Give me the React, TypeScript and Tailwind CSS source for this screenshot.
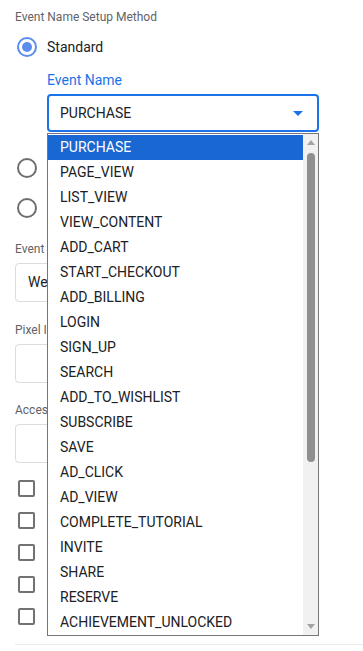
const EVENTS = [
  'PURCHASE',
  'PAGE_VIEW',
  'LIST_VIEW',
  'VIEW_CONTENT',
  'ADD_CART',
  'START_CHECKOUT',
  'ADD_BILLING',
  'LOGIN',
  'SIGN_UP',
  'SEARCH',
  'ADD_TO_WISHLIST',
  'SUBSCRIBE',
  'SAVE',
  'AD_CLICK',
  'AD_VIEW',
  'COMPLETE_TUTORIAL',
  'INVITE',
  'SHARE',
  'RESERVE',
  'ACHIEVEMENT_UNLOCKED',
];

function Radio({ checked, label }: { checked?: boolean; label?: string }) {
  return (
    <div className="flex items-center h-[20px] pl-[17px] gap-[10px]">
      <span
        className={`w-[20px] h-[20px] rounded-full border-2 flex items-center justify-center ${
          checked ? 'border-[#5b8def]' : 'border-[#6f6f6f]'
        }`}
      >
        {checked && <span className="w-[10px] h-[10px] rounded-full bg-[#5b8def]" />}
      </span>
      {label && <span className="text-[14px] text-[#202124]">{label}</span>}
    </div>
  );
}

function Field({ label, value }: { label: string; value?: string }) {
  return (
    <div className="pl-[15px]">
      <div className="text-[12px] leading-[16px] text-[#5f6368]">{label}</div>
      <div className="mt-[6px] h-[39px] w-[300px] border border-[#dadce0] rounded-[4px] flex items-center px-[12px] text-[14px] text-[#202124]">
        {value}
      </div>
    </div>
  );
}

function Checkbox() {
  return (
    <div className="flex items-center h-[17px] pl-[18px]">
      <span className="w-[17px] h-[17px] border-2 border-[#727272] rounded-[2px]" />
    </div>
  );
}

export default function App() {
  return (
    <div
      className="w-[363px] h-[651px] bg-white overflow-hidden"
      style={{ fontFamily: 'Roboto, "Liberation Sans", sans-serif' }}
    >
      <div className="pt-[9px] pl-[15px] text-[12px] leading-[16px] text-[#5f6368]">
        Event Name Setup Method
      </div>

      <div className="mt-[12px]">
        <Radio checked label="Standard" />
      </div>

      {/* Event name select with open list */}
      <div className="pl-[47px] mt-[15px]">
        <div className="text-[14px] leading-[16px] text-[#1a73e8]">Event Name</div>
        <div className="relative mt-[6px] w-[272px]">
          <div className="h-[38px] border-2 border-[#1a73e8] rounded-[4px] flex items-center justify-between pl-[11px] pr-[14px]">
            <span className="text-[14px] text-[#202124]">PURCHASE</span>
            <svg width="10" height="5" viewBox="0 0 10 5">
              <path d="M0 0h10L5 5z" fill="#1a73e8" />
            </svg>
          </div>

          <div className="absolute z-10 top-[calc(100%+1px)] left-0 w-[272px] h-[503px] bg-white border border-[#767676] flex">
            <ul className="flex-1 pt-px">
              {EVENTS.map((e, i) => (
                <li
                  key={e}
                  className={`h-[25px] flex items-center pl-[12px] text-[14px] ${
                    i === 0 ? 'bg-[#1967d2] text-white' : 'text-[#202124]'
                  }`}
                >
                  {e}
                </li>
              ))}
            </ul>
            <div className="w-[15px] bg-[#f1f1f1] flex flex-col items-center">
              <svg className="mt-[6px]" width="8" height="5" viewBox="0 0 8 5">
                <path d="M4 0L8 5H0z" fill="#a3a3a3" />
              </svg>
              <div className="mt-[8px] w-[8px] h-[309px] rounded-full bg-[#8f8f8f]" />
              <div className="flex-1" />
              <svg className="mb-[6px]" width="8" height="5" viewBox="0 0 8 5">
                <path d="M0 0h8L4 5z" fill="#a3a3a3" />
              </svg>
            </div>
          </div>
        </div>
      </div>

      <div className="mt-[26px]">
        <Radio />
      </div>
      <div className="mt-[20px]">
        <Radio />
      </div>

      <div className="mt-[23px]">
        <Field label="Event Type" value="Web" />
      </div>
      <div className="mt-[20px]">
        <Field label="Pixel ID" />
      </div>
      <div className="mt-[19px]">
        <Field label="Access Token" />
      </div>

      <div className="mt-[17px] flex flex-col gap-[15px]">
        <Checkbox />
        <Checkbox />
        <Checkbox />
        <Checkbox />
        <Checkbox />
      </div>

      <div className="mt-[19px] ml-[15px] h-px bg-[#e8eaed]" />
    </div>
  );
}
